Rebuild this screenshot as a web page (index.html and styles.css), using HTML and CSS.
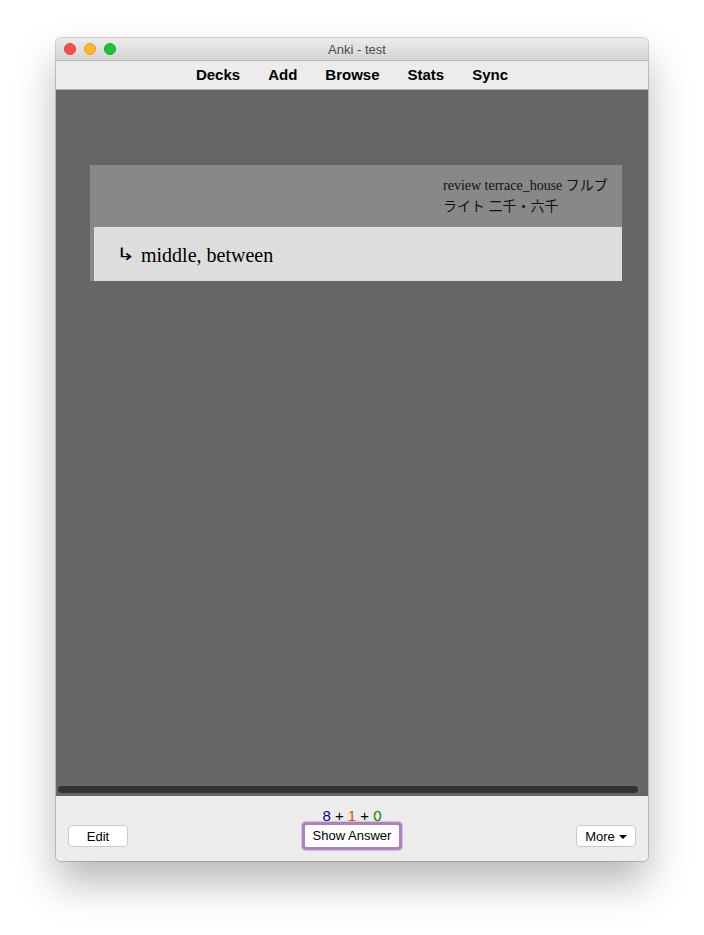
FILE: index.html
```html
<!DOCTYPE html>
<html>
<head>
<meta charset="utf-8">
<link rel="stylesheet" href="styles.css">
</head>
<body>
<div class="window">
  <div class="titlebar">
    <div class="lights">
      <span class="light red"></span>
      <span class="light yellow"></span>
      <span class="light green"></span>
    </div>
    <div class="title">Anki - test</div>
  </div>
  <div class="toolbar">
    <span class="tb">Decks</span>
    <span class="tb">Add</span>
    <span class="tb">Browse</span>
    <span class="tb">Stats</span>
    <span class="tb">Sync</span>
  </div>
  <div class="main">
    <div class="card">
      <div class="front">
        <div class="front-text">review terrace_house フルブ<br>ライト 二千・六千</div>
      </div>
      <div class="back">
        <span class="arrow">↳</span><span>middle, between</span>
      </div>
    </div>
    <div class="spacer"></div>
    <div class="scrollbar"><div class="thumb"></div></div>
  </div>
  <div class="bottom">
    <div class="btn edit">Edit</div>
    <div class="center">
      <div class="counts"><span class="c-new">8</span> + <span class="c-lrn">1</span> + <span class="c-rev">0</span></div>
      <div class="focus"><div class="btn show">Show Answer</div></div>
    </div>
    <div class="btn more">More <span class="caret"></span></div>
  </div>
</div>
</body>
</html>
```

FILE: styles.css
```css
html, body {
  margin: 0;
  padding: 0;
  background: #ffffff;
}
body {
  width: 704px;
  height: 935px;
  overflow: hidden;
  font-family: "Liberation Sans", Arial, sans-serif;
}
.window {
  margin: 38px 0 0 56px;
  width: 592px;
  height: 823px;
  border-radius: 5px;
  overflow: hidden;
  display: flex;
  flex-direction: column;
  box-shadow: 0 0 0 1px rgba(0,0,0,0.18), 0 22px 40px rgba(0,0,0,0.28);
  background: #ececec;
}
.titlebar {
  height: 22px;
  flex: none;
  background: linear-gradient(#ebebeb, #d5d5d5);
  border-bottom: 1px solid #b8b8b8;
  position: relative;
  display: flex;
  align-items: center;
  justify-content: center;
}
.lights {
  position: absolute;
  left: 8px;
  top: 5px;
  display: flex;
  gap: 8px;
}
.light {
  width: 12px;
  height: 12px;
  border-radius: 50%;
  box-sizing: border-box;
}
.red { background: #fd4e49; border: 1px solid #e1403b; }
.yellow { background: #fdb72a; border: 1px solid #e09e1e; }
.green { background: #19c53a; border: 1px solid #14aa2c; }
.title {
  font-family: "Liberation Sans", Arial, sans-serif;
  font-size: 13px;
  color: #4a4a4a;
  margin-left: 10px;
}
.toolbar {
  height: 29px;
  flex: none;
  background: #ececec;
  border-bottom: 1px solid #a9a9a9;
  display: flex;
  align-items: center;
  justify-content: center;
  gap: 28px;
  padding: 0 0 2px 0;
  box-sizing: border-box;
}
.tb {
  font-weight: bold;
  font-size: 15px;
  color: #000;
}
.main {
  flex: 1;
  background: #666666;
  display: flex;
  flex-direction: column;
  padding: 75px 0 0 0;
}
.card {
  margin: 0 26px 0 34px;
  background: #888888;
  font-family: "Liberation Serif", "Times New Roman", "Noto Sans CJK JP", serif;
}
.front {
  height: 62px;
  display: flex;
  justify-content: flex-end;
  padding-right: 14px;
  box-sizing: border-box;
}
.front-text {
  font-size: 14px;
  line-height: 21px;
  color: #111;
  padding-top: 10px;
  width: 165px;
}
.back {
  margin-left: 4px;
  height: 54px;
  background: #dddddd;
  display: flex;
  align-items: center;
  padding-left: 22px;
  padding-top: 2px;
  box-sizing: border-box;
  font-size: 20px;
  color: #000;
  gap: 7px;
}
.arrow {
  font-family: "DejaVu Sans", sans-serif;
  font-size: 17px;
  display: inline-block;
  width: 18px;
  transform: scaleX(1.35);
  transform-origin: left center;
  position: relative;
  top: -1px;
}
.spacer { flex: 1; }
.scrollbar {
  height: 9px;
  padding: 0 10px 0 2px;
  margin-bottom: 1px;
}
.thumb {
  height: 7px;
  background: #333333;
  border-radius: 4px;
}
.bottom {
  height: 65px;
  flex: none;
  background: #ececec;
  display: flex;
  align-items: flex-start;
  justify-content: space-between;
  padding: 0 12px;
  box-sizing: border-box;
}
.btn {
  background: #ffffff;
  border: 1px solid #c9c9c9;
  border-radius: 4px;
  box-sizing: border-box;
  font-size: 13px;
  color: #000;
  height: 22px;
  display: flex;
  align-items: center;
  justify-content: center;
}
.edit {
  width: 60px;
  margin-top: 29px;
}
.more {
  width: 60px;
  margin-top: 29px;
  gap: 4px;
}
.caret {
  width: 0;
  height: 0;
  border-left: 4px solid transparent;
  border-right: 4px solid transparent;
  border-top: 4px solid #000;
  margin-top: 1px;
}
.center {
  display: flex;
  flex-direction: column;
  align-items: center;
  padding-top: 12px;
}
.counts {
  font-size: 15px;
  line-height: 16px;
  color: #000;
  margin-bottom: -2px;
}
.c-new {
  color: #0000aa;
  text-decoration: underline;
  text-decoration-thickness: 1px;
  text-underline-offset: 1px;
}
.c-lrn { color: #c35617; }
.c-rev { color: #008800; }
.focus {
  border: 3px solid #b07fc0;
  border-radius: 4px;
  background: #c9a7d3;
  box-shadow: 0 0 1px 1px rgba(176,127,192,0.4);
}
.show {
  width: 94px;
  border: none;
  border-radius: 2px;
  padding-bottom: 1px;
}
```
